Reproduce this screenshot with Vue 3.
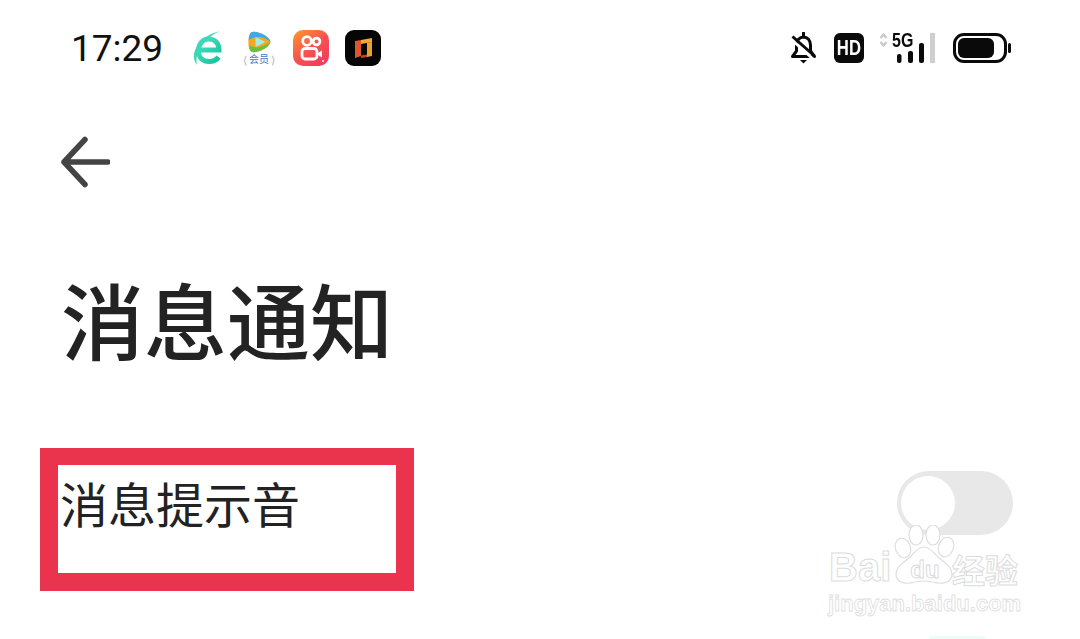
<script setup>
const title = '消息通知'
const rowLabel = '消息提示音'
</script>

<template>
  <div class="page">
    <div class="status-bar">
      <span class="time">17:29</span>
      <div class="app-icons">
        <svg class="icon-e" width="30" height="34" viewBox="0 0 30 34">
          <defs>
            <linearGradient id="eGrad" x1="0" y1="0" x2="1" y2="1">
              <stop offset="0" stop-color="#4fe0c4" />
              <stop offset="1" stop-color="#12c49c" />
            </linearGradient>
          </defs>
          <path d="M7 19h19c0-7-4.500-11-10.500-11S5.500 13 5.500 20c0 6.500 4.500 10.500 10.500 10.500 4 0 7.500-1.500 9.500-4.500" fill="none" stroke="url(#eGrad)" stroke-width="5" />
          <path d="M27 0C14 3 3 12 1 23c-.6 4 .5 8 3 11-1-4-.6-8 .8-12C8 12 16 5 27 0z" fill="#3bd8b8" />
        </svg>
        <div class="video-icon">
          <svg width="24" height="22" viewBox="0 0 24 22">
            <path d="M4 1.500C8-1 19 3.500 22.500 8.500c1.300 2 1.300 3.500 0 5C19 18.500 8 23 4 20.500 .5 18 .5 4 4 1.500z" fill="#f2a922" />
            <path d="M1.800 9C2 5.500 2.800 2.500 4 1.500 8-1 19 3.500 22.500 8.500c.6.800.9 1.600 1 2.400C17 5 8 4.500 1.800 9z" fill="#3fa9e6" />
            <path d="M2 14c5 3.500 12 3 21-2.500-.2.700-.5 1.300-1 2C19 18.500 8 23 4 20.500 3 19.500 2.300 17 2 14z" fill="#6fbf3f" />
            <path d="M8.500 6l10 5-10 5z" fill="#a8ebe4" />
          </svg>
          <div class="video-badge">
            <span class="laurel">⟨</span><span class="badge-text">会员</span><span class="laurel">⟩</span>
          </div>
        </div>
        <svg class="icon-ks" width="36" height="36" viewBox="0 0 36 36">
          <defs>
            <linearGradient id="ksGrad" x1="0" y1="0" x2="0.800" y2="1">
              <stop offset="0" stop-color="#fc9a2b" />
              <stop offset="0.55" stop-color="#f8524f" />
              <stop offset="1" stop-color="#f23a5f" />
            </linearGradient>
          </defs>
          <rect width="36" height="36" rx="10" fill="url(#ksGrad)" />
          <g fill="none" stroke="#fff" stroke-width="2.800">
            <circle cx="14" cy="11" r="4.300" />
            <circle cx="23.500" cy="11.500" r="3.400" />
            <rect x="9" y="18.500" width="15" height="10.500" rx="3" />
          </g>
          <path d="M25 23l4-2.500v7l-4-2.500z" fill="#fff" />
          <circle cx="30" cy="31" r="1" fill="#fff" />
        </svg>
        <svg class="icon-dark" width="36" height="36" viewBox="0 0 36 36">
          <rect width="36" height="36" rx="9" fill="#050505" />
          <path d="M10 11l6-1v16l-6 2z" fill="#d9572b" />
          <path d="M16 10l11-2v4l-11 2z" fill="#f0a733" />
          <path d="M22 12.500l5-.5v14l-5 1z" fill="#eba030" />
          <path d="M16 25.500l6-1V27l-6 1z" fill="#c8431f" />
        </svg>
      </div>
      <div class="sys-icons">
        <svg class="bell" width="27" height="32" viewBox="0 0 27 32">
          <g fill="none" stroke="#0a0a0a" stroke-width="3" stroke-linejoin="round">
            <path d="M6.500 19v-6C6.500 8.500 9.500 5 13.500 5s7 3.500 7 8v6l4 5.500H2.500z" />
            <path d="M13.500 1v4" stroke-linecap="round" />
          </g>
          <path d="M2 8l21 19" stroke="#fff" stroke-width="3" />
          <path d="M2.500 4.500l22 19.500" stroke="#0a0a0a" stroke-width="3" />
          <path d="M10 28h7l-3.500 3.500z" fill="#0a0a0a" />
        </svg>
        <div class="hd-badge"><span class="hd-text">HD</span></div>
        <div class="signal">
          <div class="signal-top">
            <svg width="9" height="14" viewBox="0 0 9 14">
              <path d="M1.500 5l3-3.500 3 3.500M1.500 9l3 3.500 3-3.500" fill="none" stroke="#c8c8c8" stroke-width="2.200" />
            </svg>
            <span class="five-g">5G</span>
          </div>
          <svg class="signal-bars" width="56" height="30" viewBox="0 0 56 30">
            <rect x="18" y="21" width="4.500" height="9" rx="2" fill="#0a0a0a" />
            <rect x="29" y="18" width="5" height="12" rx="2" fill="#0a0a0a" />
            <rect x="40" y="10" width="5" height="20" rx="2" fill="#0a0a0a" />
            <rect x="51" y="0" width="5" height="30" fill="#cfcfcf" />
          </svg>
        </div>
        <svg width="58" height="30" viewBox="0 0 58 30">
          <rect x="1.500" y="1.500" width="51" height="27" rx="9.500" fill="none" stroke="#0a0a0a" stroke-width="3" />
          <rect x="5" y="5" width="36" height="20" rx="6" fill="#0a0a0a" />
          <rect x="55" y="10" width="3" height="10" rx="1.500" fill="#0a0a0a" />
        </svg>
      </div>
    </div>

    <div class="nav">
      <svg width="50" height="52" viewBox="0 0 50 52">
        <path d="M25 3.500L4 26l21 22.500M4 26h44" fill="none" stroke="#444" stroke-width="5.500" stroke-linecap="round" stroke-linejoin="round" />
      </svg>
    </div>

    <h1 class="title">{{ title }}</h1>

    <div class="row">
      <div class="row-box">
        <span class="row-label">{{ rowLabel }}</span>
      </div>
      <div class="switch">
        <div class="knob"></div>
      </div>
    </div>

    <div class="watermark">
      <div class="wm-top">
        <span class="wm-bai">Bai</span>
        <svg class="wm-paw" width="68" height="60" viewBox="0 0 68 60">
          <g fill="#fff" stroke="#dedede" stroke-width="1.200">
            <ellipse cx="23" cy="10" rx="7" ry="10" />
            <ellipse cx="40" cy="10" rx="7" ry="10" />
            <ellipse cx="10" cy="23" rx="7.500" ry="10" transform="rotate(-20 10 23)" />
            <ellipse cx="53" cy="22" rx="7.500" ry="10" transform="rotate(20 53 22)" />
            <path d="M31 22c7 0 10 7 15 11 6 5 13 9 13 16 0 8-8 10-14 9-5-1-9-2-14-2s-9 1-14 2c-6 1-14-1-14-9 0-7 7-11 13-16 5-4 8-11 15-11z" />
          </g>
          <text x="32" y="53" text-anchor="middle" class="wm-du">du</text>
        </svg>
        <span class="wm-cn">经验</span>
      </div>
      <div class="wm-url">jingyan.baidu.com</div>
    </div>
    <div class="bottom-tint"></div>
  </div>
</template>

<style scoped>
.page {
  position: relative;
  width: 1080px;
  height: 639px;
  overflow: hidden;
  background: #fff;
  font-family: "Noto Sans CJK SC", "Noto Sans", sans-serif;
  color: #222;
}

.status-bar {
  display: flex;
  align-items: center;
  height: 96px;
  padding: 0 69px 0 71px;
  box-sizing: border-box;
}

.time {
  width: 122px;
  font-family: Roboto, sans-serif;
  font-size: 37px;
  font-weight: 400;
  color: #111;
  line-height: 1;
}

.app-icons {
  display: flex;
  align-items: center;
}

.icon-e {
  margin-right: 17px;
}

.video-icon {
  display: flex;
  flex-direction: column;
  align-items: center;
  width: 38px;
  margin-right: 15px;
}

.video-badge {
  display: flex;
  align-items: center;
  justify-content: center;
  gap: 2px;
  height: 12px;
  line-height: 12px;
  color: #3d78c9;
}

.laurel {
  color: #9ab6d8;
  font-size: 11px;
}

.badge-text {
  font-size: 10px;
}

.icon-ks {
  margin-right: 16px;
}

.sys-icons {
  display: flex;
  align-items: center;
  margin-left: auto;
}

.bell {
  margin-right: 17px;
}

.hd-badge {
  display: flex;
  align-items: center;
  justify-content: center;
  width: 30px;
  height: 30px;
  margin-right: 15px;
  border-radius: 6px;
  background: #0a0a0a;
}

.hd-text {
  color: #fff;
  font-family: "Liberation Sans", sans-serif;
  font-size: 22px;
  font-weight: 700;
  transform: scaleX(0.76);
}

.signal {
  position: relative;
  width: 56px;
  height: 30px;
  margin-right: 18px;
}

.signal-top {
  position: absolute;
  left: 0;
  top: 0;
  display: flex;
  align-items: center;
  gap: 4px;
  height: 14px;
}

.five-g {
  font-family: "Liberation Sans", sans-serif;
  font-size: 20px;
  font-weight: 700;
  color: #0a0a0a;
  line-height: 14px;
  transform: scaleX(0.8);
  transform-origin: left;
}

.signal-bars {
  display: block;
}

.nav {
  height: 52px;
  margin-top: 40px;
  padding-left: 60px;
}

.title {
  margin: 75px 0 0 61px;
  font-size: 83px;
  font-weight: 500;
  line-height: 110px;
  color: #232323;
}

.row {
  display: flex;
  align-items: flex-start;
  justify-content: space-between;
  margin-top: 75px;
  padding: 0 67px 0 40px;
}

.row-box {
  width: 374px;
  height: 143px;
  box-sizing: border-box;
  border: 18px solid #ea334d;
  border-top-width: 17px;
  padding-left: 2px;
}

.row-label {
  display: block;
  font-size: 48px;
  font-weight: 400;
  line-height: 74px;
  color: #222;
}

.switch {
  display: flex;
  align-items: center;
  width: 116px;
  height: 64px;
  margin-top: 23px;
  border-radius: 32px;
  background: #e8e8e8;
  padding-left: 4px;
  box-sizing: border-box;
  filter: blur(0.6px);
}

.knob {
  width: 54px;
  height: 54px;
  border-radius: 50%;
  background: #fff;
}

.watermark {
  position: absolute;
  left: 828px;
  top: 525px;
  width: 200px;
}

.wm-top {
  position: relative;
  height: 65px;
}

.wm-bai {
  position: absolute;
  left: 1px;
  top: 19px;
  font-family: "Liberation Sans", sans-serif;
  font-size: 40px;
  font-weight: 700;
  line-height: 46px;
  color: #fff;
  -webkit-text-stroke: 1px #dcdcdc;
}

.wm-paw {
  position: absolute;
  left: 65px;
  top: 0;
}

.wm-du {
  font-family: "Liberation Sans", sans-serif;
  font-size: 24px;
  font-weight: 700;
  fill: #fff;
  stroke: #d8d8d8;
  stroke-width: 0.900px;
}

.wm-cn {
  position: absolute;
  left: 124px;
  top: 24px;
  font-size: 33px;
  font-weight: 700;
  line-height: 40px;
  color: #fff;
  -webkit-text-stroke: 1px #dcdcdc;
}

.wm-url {
  font-family: "Liberation Sans", sans-serif;
  font-size: 22px;
  font-weight: 700;
  line-height: 27px;
  color: #fff;
  -webkit-text-stroke: 0.800px #dedede;
  white-space: nowrap;
}

.bottom-tint {
  position: absolute;
  left: 930px;
  top: 636px;
  width: 55px;
  height: 3px;
  background: #eefcf7;
}
</style>
